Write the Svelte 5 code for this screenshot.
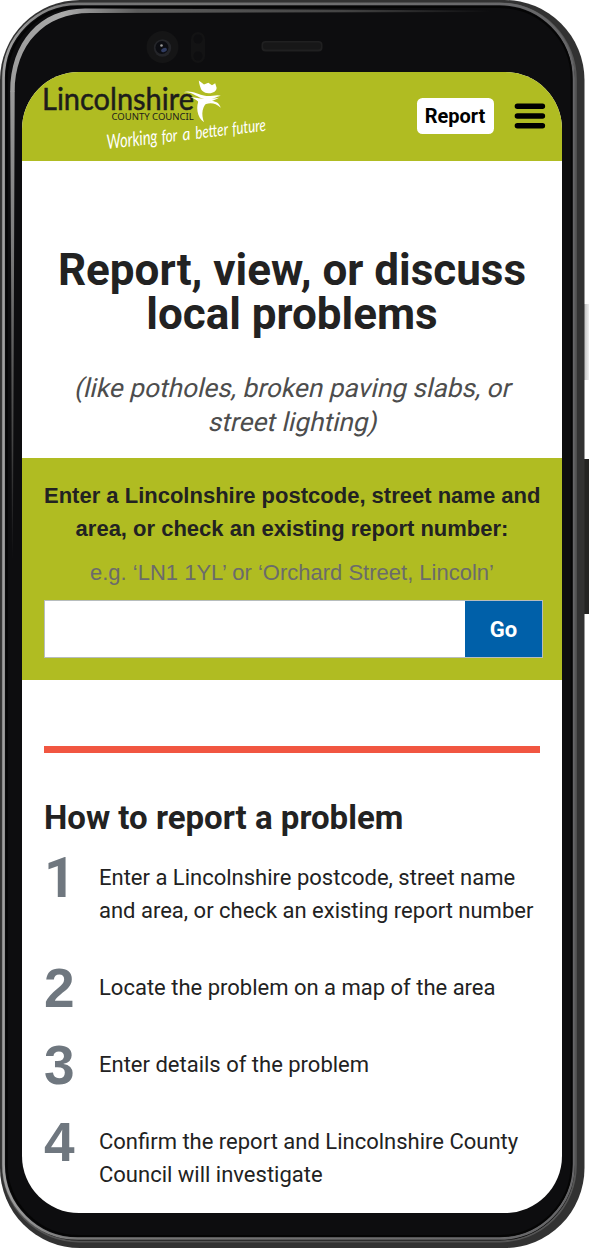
<script>
  const steps = [
    ['Enter a Lincolnshire postcode, street name', 'and area, or check an existing report number'],
    ['Locate the problem on a map of the area'],
    ['Enter details of the problem'],
    ['Confirm the report and Lincolnshire County', 'Council will investigate']
  ];
</script>

<div class="device">
  <svg class="shell" width="589" height="1248" viewBox="0 0 589 1248" aria-hidden="true">
    <defs>
      <linearGradient id="rim" x1="0" x2="1" y1="0" y2="0">
        <stop offset="0" stop-color="#a0a0a0" />
        <stop offset=".12" stop-color="#777" />
        <stop offset="1" stop-color="#666668" />
      </linearGradient>
      <linearGradient id="glint" gradientUnits="userSpaceOnUse" x1="0" x2="490" y1="0" y2="0">
        <stop offset="0" stop-color="#9a9a9a" />
        <stop offset=".13" stop-color="#aaa" />
        <stop offset=".28" stop-color="#5c5c5c" />
        <stop offset=".7" stop-color="#444" />
        <stop offset="1" stop-color="#0d0d0f" />
      </linearGradient>
      <linearGradient id="fade" gradientUnits="userSpaceOnUse" x1="0" x2="0" y1="88" y2="560">
        <stop offset="0" stop-color="#9a9a9a" />
        <stop offset=".3" stop-color="#808080" />
        <stop offset=".75" stop-color="#444" />
        <stop offset="1" stop-color="#0d0d0f" />
      </linearGradient>
      <linearGradient id="power" x1="0" x2="1" y1="0" y2="0">
        <stop offset="0" stop-color="#aaa" />
        <stop offset="1" stop-color="#eee" />
      </linearGradient>
    </defs>
    <rect x="582" y="304" width="7" height="76" fill="url(#power)" />
    <rect x="582" y="459" width="7" height="155" fill="#242423" />
    <rect x="0" y="0" width="584.5" height="1248" rx="80" fill="#323232" />
    <rect x="2.8" y="3.4" width="573" height="1238" rx="76" fill="#050505" stroke="#555" stroke-width="2" />
    <rect x="3.6" y="4" width="570" height="1234.5" rx="74" fill="#0d0d0f" stroke="url(#rim)" stroke-width="2.6" />
    <rect x="6.7" y="7" width="565" height="1229" rx="72" fill="#0d0d0f" stroke="#050505" stroke-width="2" />
    <path d="M10.2 91.5H14.7L13.9 300L12.8 560H12L11.2 300Z" fill="url(#fade)" />
    <path d="M10.2 92C10.2 42 40 8.5 85 8.5L490 10.5V12L90 13C44 13 14.7 45 14.7 92Z" fill="url(#glint)" />
    <circle cx="162.5" cy="47" r="16" fill="#151516" />
    <circle cx="162.5" cy="48" r="8.7" fill="#242529" />
    <circle cx="162" cy="47.5" r="6.5" fill="#0c0d12" />
    <ellipse cx="164" cy="50" rx="3" ry="2" fill="#303c61" transform="rotate(-25 164 50)" />
    <circle cx="161.5" cy="45.5" r="1.3" fill="#999" />
    <rect x="191" y="32" width="14" height="31" rx="7" fill="#131314" />
    <circle cx="198" cy="39" r="4.5" fill="#0e0e10" />
    <circle cx="198" cy="56" r="4.5" fill="#0e0e10" />
    <rect x="261.5" y="41" width="61" height="10.5" rx="4" fill="#202021" />
    <rect x="263" y="42.5" width="58" height="7" rx="3" fill="#171718" />
  </svg>

  <main class="screen">
    <header>
      <svg class="logo" width="240" height="88" viewBox="22 72 240 88" role="img" aria-label="Lincolnshire County Council">
        <text x="42" y="110" font-family="Lato" font-size="31.5" fill="#1d1d1b" stroke="#1d1d1b" stroke-width=".5" textLength="152" lengthAdjust="spacingAndGlyphs">Lincolnshire</text>
        <text x="111.4" y="119.9" font-family="Noto Sans" font-size="9.8" fill="#1d1d1b" textLength="82.4" lengthAdjust="spacingAndGlyphs">COUNTY COUNCIL</text>
        <g fill="#fff">
          <path d="M198.8 80.5L204 84.5L208.3 82.7L212 85.3L215.2 83.2L216.6 87.8C216.7 91 213.2 93.5 208.5 93.3C203.8 93.2 201 90.3 200.4 87.3C199.5 85 199 82.5 198.8 80.5Z" />
          <path d="M183.3 92.5C190 89.5 198 94.5 205 95.8C211 96.8 216.5 94 220.8 95.7C215 97.1 212 100.4 205 99.2C196.5 97.5 192 91 183.3 92.5Z" />
          <path d="M190 97.2C199 97.5 205 100.5 219 97.8C213 101.5 205.5 102.3 200.5 104.2C197.5 102.7 200 100.2 190 97.2Z" />
          <path d="M211 98.5C201 106 201.3 114.3 204 122.3C196.7 117 195.5 106 199.5 99Z" />
          <path d="M201.7 106.3C206 99.5 218 98.5 220.8 107.8C214.3 101.8 207.5 102.5 201.7 106.3Z" />
          <g transform="translate(108.5 149) rotate(-6.6)" font-family="Lato" font-style="italic" font-size="17.5">
            <text x="-1" y="0" font-size="20" textLength="51" lengthAdjust="spacingAndGlyphs">Working</text>
            <text x="54" y="0" textLength="16" lengthAdjust="spacingAndGlyphs">for</text>
            <text x="75" y="0" textLength="8" lengthAdjust="spacingAndGlyphs">a</text>
            <text x="88" y="0" textLength="33" lengthAdjust="spacingAndGlyphs">better</text>
            <text x="125" y="0" textLength="34" lengthAdjust="spacingAndGlyphs">future</text>
          </g>
        </g>
      </svg>
      <div class="actions">
        <button class="report">Report</button>
        <svg width="32" height="26" viewBox="0 0 32 26" role="img" aria-label="Menu">
          <path d="M3.4 3.3H28.4M3.4 13H28.4M3.4 22.7H28.4" stroke="#000" stroke-width="5.5" stroke-linecap="round" />
        </svg>
      </div>
    </header>

    <section class="hero">
      <h1>Report, view, or discuss<br />local problems</h1>
      <p><span>(like potholes, broken paving slabs, or</span><span>street lighting)</span></p>
    </section>

    <form>
      <label for="place">Enter a Lincolnshire postcode, street name and<br />area, or check an existing report number:</label>
      <p class="hint">e.g. ‘LN1 1YL’ or ‘Orchard Street, Lincoln’</p>
      <div class="search">
        <input id="place" type="text" />
        <button type="button">Go</button>
      </div>
    </form>

    <section class="guide">
      <hr />
      <h2>How to report a problem</h2>
      <ol>
        {#each steps as lines, i}
          <li>
            <span class="number" class:first={i === 0}>{i + 1}</span>
            <div>{#each lines as line}<div class="line">{line}</div>{/each}</div>
          </li>
        {/each}
      </ol>
    </section>
  </main>
</div>

<style>
  :global(body) { margin: 0; background: #fff; }
  .device {
    position: relative;
    box-sizing: border-box;
    width: 589px;
    height: 1248px;
    padding: 72px 27px 35px 22px;
    overflow: hidden;
    font-family: Roboto, sans-serif;
    color: #222;
  }
  .shell { position: absolute; inset: 0; }
  .screen {
    position: relative;
    width: 540px;
    height: 1140.5px;
    overflow: hidden;
    background: #fff;
    border-radius: 57px;
  }
  header {
    display: flex;
    justify-content: space-between;
    height: 88.5px;
    background: #b0bc22;
  }
  .logo { overflow: visible; }
  .actions {
    display: flex;
    align-items: center;
    gap: 20px;
    padding: 0 16.5px 0 0;
  }
  button { border: 0; font-family: Roboto, sans-serif; font-weight: 700; }
  .report {
    width: 77px;
    height: 36px;
    padding: 0;
    border-radius: 5.5px;
    background: #fff;
    color: #000;
    font-size: 20px;
  }
  .hero {
    box-sizing: border-box;
    height: 297px;
    padding-top: 87.5px;
    text-align: center;
    white-space: nowrap;
  }
  h1 { margin: 0; font-size: 44px; line-height: 44px; font-weight: 700; }
  .hero p {
    margin: 34.8px 0 0;
    padding-left: 4px;
    font-size: 26.25px;
    line-height: 34.5px;
    color: #4d4d4d;
  }
  .hero span { display: block; transform: skewX(-13deg); }
  form {
    box-sizing: border-box;
    height: 222.5px;
    padding: 21.5px 19px 0 22px;
    background: #b0bc22;
    font-family: "Liberation Sans", Arial, sans-serif;
    text-align: center;
    white-space: nowrap;
  }
  label {
    display: block;
    margin-right: 3px;
    font-size: 22px;
    line-height: 33px;
    font-weight: 700;
  }
  .hint {
    margin: 11px 3px 11px 0;
    font-size: 22px;
    line-height: 33px;
    color: #6b6b6b;
  }
  .search { display: flex; height: 56px; border: 1px solid #b7bdbd; }
  input { flex: 1; min-width: 0; border: 0; padding: 0 12px; outline: 0; }
  .search button {
    width: 77px;
    padding: 0;
    background: #0060a9;
    color: #fff;
    font-size: 22px;
  }
  .guide { padding: 66px 22px 0; white-space: nowrap; }
  hr { height: 7px; margin: 0; border: 0; background: #f15641; }
  h2 { margin: 46px 0 24px; font-size: 33px; line-height: 38px; font-weight: 700; }
  ol {
    display: flex;
    flex-direction: column;
    gap: 44px;
    margin: 0;
    padding: 0;
    list-style: none;
  }
  li { display: flex; font-size: 22px; line-height: 33px; }
  .number {
    width: 55px;
    height: 33px;
    font-family: "Liberation Sans", Arial, sans-serif;
    font-size: 55px;
    line-height: 35px;
    font-weight: 700;
    color: #6f777f;
  }
  .number.first { font-family: Roboto, sans-serif; }
</style>
